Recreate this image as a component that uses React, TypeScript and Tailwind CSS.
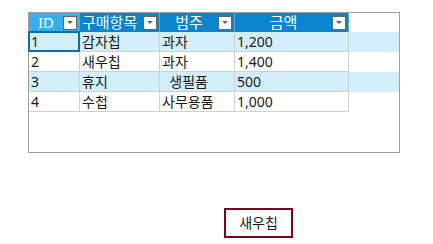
const columns = [
  { label: "ID", width: "w-[51px]", bg: "bg-[#35aff0]", center: true },
  { label: "구매항목", width: "w-[80px]", bg: "bg-[#0a84cc]", center: false },
  { label: "범주", width: "w-[75px]", bg: "bg-[#0a84cc]", center: true },
  { label: "금액", width: "w-[114px]", bg: "bg-[#0a84cc]", center: true },
];

const rows = [
  ["1", "감자칩", "과자", "1,200"],
  ["2", "새우칩", "과자", "1,400"],
  ["3", "휴지", "\u00a0\u00a0생필품", "500"],
  ["4", "수첩", "사무용품", "1,000"],
];

function FilterButton() {
  return (
    <span className="flex h-[14px] w-[14px] shrink-0 items-center justify-center border border-[#666] bg-white">
      <svg width="6" height="4" viewBox="0 0 6 4">
        <path d="M0 0h6L3 3z" fill="#666" />
      </svg>
    </span>
  );
}

export default function App() {
  return (
    <div
      className="h-[244px] w-[433px] bg-white text-[14px] text-[#1a1a1a]"
      style={{ fontFamily: '"Noto Sans", "Noto Sans CJK KR", sans-serif' }}
    >
      <div className="ml-[28px] pt-[12px]">
        <div className="h-[141px] w-[372px] border border-[#a0a0a0] bg-white">
          <div className="flex h-[19px]">
            {columns.map((c) => (
              <div
                key={c.label}
                className={`${c.width} ${c.bg} flex items-center border-r border-[#5aa9da] pr-[2px] text-[15px] leading-none text-white`}
              >
                <span className={`flex-1 ${c.center ? "text-center" : "pl-[2px] text-left"}`}>
                  {c.label}
                </span>
                <FilterButton />
              </div>
            ))}
          </div>
          {rows.map((r, i) => (
            <div key={i} className={`flex h-[20px] ${i % 2 === 0 ? "bg-[#d3eefb]" : "bg-white"}`}>
              {r.map((v, j) => (
                <div
                  key={j}
                  className={`${columns[j].width} relative flex items-center border-b border-r border-[#d0d0d0] pl-[2px] leading-none`}
                >
                  {v}
                  {i === 0 && j === 0 && (
                    <span className="absolute -left-px -top-px h-[21px] w-[52px] border-2 border-[#0b6fa6]" />
                  )}
                </div>
              ))}
            </div>
          ))}
        </div>
      </div>
      <div className="ml-[224px] mt-[55px] flex h-[30px] w-[69px] items-center justify-center border-2 border-[#800020] bg-white leading-none">
        새우칩
      </div>
    </div>
  );
}
